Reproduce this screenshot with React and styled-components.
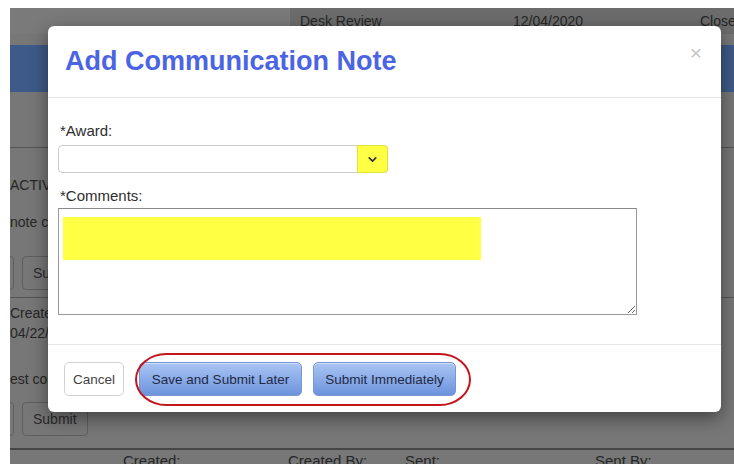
import styled, { createGlobalStyle } from 'styled-components';
import { ChevronDown } from 'lucide-react';

const GlobalStyle = createGlobalStyle`
  html, body {
    margin: 0;
    padding: 0;
    background: #fff;
  }
  body {
    font-family: "Liberation Sans", Arial, sans-serif;
  }
  * {
    box-sizing: border-box;
  }
`;

const Screen = styled.div`
  position: relative;
  width: 734px;
  height: 464px;
  padding: 8px 0 0 10px;
  overflow: hidden;
`;

/* page underneath the dialog, already dimmed */
const Page = styled.div`
  height: 100%;
  background: #777;
  color: #262626;
  font-size: 14px;
  line-height: 18px;
  overflow: hidden;
  display: flex;
  flex-direction: column;
`;

const TableRow = styled.div`
  display: grid;
  grid-template-columns: 280px 213px 187px 1fr;
  height: 26px;
  flex-shrink: 0;
`;

const Cell = styled.div`
  padding: 4px 10px;
  white-space: nowrap;
  background: ${(p) => (p.$blank ? '#7a7a7a' : '#6c6c6c')};
`;

const Band = styled.div`
  margin-top: 11px;
  height: 47px;
  flex-shrink: 0;
  background: #3e5a88;
`;

const Section = styled.div`
  margin-top: ${(p) => p.$top}px;
  border-top: 1px solid #555;
  flex-shrink: 0;
`;

const Line = styled.div`
  margin-top: ${(p) => p.$top || 0}px;
  white-space: nowrap;
`;

const ButtonRow = styled.div`
  display: flex;
  gap: 8px;
  margin-top: ${(p) => p.$top}px;
  margin-left: -52px;
`;

const PageButton = styled.div`
  height: 34px;
  padding: 0 10px;
  display: flex;
  align-items: center;
  border: 1px solid #5e5e5e;
  border-radius: 4px;
  color: #2a2a2a;
  width: ${(p) => p.$w}px;
`;

const Rule = styled.div`
  margin-top: 12px;
  border-top: 2px solid #454545;
  flex-shrink: 0;
`;

const HeadRow = styled.div`
  display: grid;
  grid-template-columns: 113px 165px 117px 190px 1fr;
  margin-top: 2px;
  font-size: 15px;
`;

/* dialog */
const Modal = styled.div`
  position: absolute;
  left: 48px;
  top: 26px;
  width: 673px;
  height: 386px;
  background: #fff;
  border-radius: 6px;
  box-shadow: 0 6px 18px rgba(0, 0, 0, 0.45);
  display: flex;
  flex-direction: column;
`;

const ModalHeader = styled.div`
  height: 72px;
  padding: 0 17px;
  display: flex;
  justify-content: space-between;
  align-items: center;
  border-bottom: 1px solid #e6e6e6;
`;

const Title = styled.h2`
  margin: 0;
  font-size: 27px;
  font-weight: 700;
  color: #4b64e4;
`;

const Close = styled.span`
  align-self: flex-start;
  margin-top: 15px;
  margin-right: 2px;
  font-size: 21px;
  color: #c4c4c4;
`;

const ModalBody = styled.div`
  flex: 1;
  padding: 0 10px;
`;

const Label = styled.div`
  margin-top: ${(p) => p.$top}px;
  padding-left: 2px;
  font-size: 15px;
  line-height: 18px;
  color: #2e2e2e;
`;

const SelectBox = styled.div`
  margin-top: 5px;
  width: 330px;
  height: 28px;
  display: flex;
  justify-content: flex-end;
  border: 1px solid #ccc;
  border-radius: 4px;
`;

const Caret = styled.div`
  width: 31px;
  margin: -1px -1px -1px 0;
  display: flex;
  align-items: center;
  justify-content: center;
  background: #ffff44;
  border: 1px solid #e2e23a;
  border-radius: 0 4px 4px 0;
  color: #333;
`;

const TextWrap = styled.div`
  position: relative;
  margin-top: 3px;
  width: 579px;
  height: 107px;
`;

const Comments = styled.textarea`
  display: block;
  width: 100%;
  height: 100%;
  margin: 0;
  border: 1px solid #999;
  border-top-color: #888;
  border-radius: 0;
  background: #fff;
`;

const Redaction = styled.div`
  position: absolute;
  left: 5px;
  top: 9px;
  width: 418px;
  height: 43px;
  background: #ffff44;
  pointer-events: none;
`;

const ModalFooter = styled.div`
  position: relative;
  height: 68px;
  padding: 17px 16px;
  display: flex;
  border-top: 1px solid #e6e6e6;
`;

const Button = styled.button`
  height: 34px;
  margin: 0 ${(p) => p.$after || 0}px 0 0;
  padding: 0;
  width: ${(p) => p.$w}px;
  font-family: "Liberation Sans", Arial, sans-serif;
  font-size: 13.5px;
  border-radius: 5px;
  color: ${(p) => (p.$primary ? '#1f2a45' : '#444')};
  border: 1px solid ${(p) => (p.$primary ? '#7896d2' : '#d2d2d2')};
  background: ${(p) =>
    p.$primary ? 'linear-gradient(#a9c5f3, #6d93dd)' : '#fff'};
  box-shadow: ${(p) =>
    p.$primary ? 'inset 0 1px 0 rgba(255,255,255,0.45)' : 'none'};
`;

const Highlight = styled.div`
  position: absolute;
  left: 87px;
  top: 8px;
  width: 336px;
  height: 53px;
  border: 2px solid #c3151c;
  border-radius: 32px / 27px;
  pointer-events: none;
`;

export default function App() {
  return (
    <Screen>
      <GlobalStyle />
      <Page>
        <TableRow>
          <Cell $blank />
          <Cell>Desk Review</Cell>
          <Cell>12/04/2020</Cell>
          <Cell>Closed</Cell>
        </TableRow>
        <Band />
        <Section $top={55}>
          <Line $top={28}>ACTIVE</Line>
          <Line $top={19}>note com</Line>
          <ButtonRow $top={25}>
            <PageButton $w={56} />
            <PageButton $w={66}>Submit</PageButton>
          </ButtonRow>
        </Section>
        <Section $top={7}>
          <Line $top={6}>Created</Line>
          <Line $top={2}>04/22/20</Line>
          <Line $top={28}>est com</Line>
          <ButtonRow $top={14}>
            <PageButton $w={56} />
            <PageButton $w={66}>Submit</PageButton>
          </ButtonRow>
        </Section>
        <Rule />
        <HeadRow>
          <span />
          <span>Created:</span>
          <span>Created By:</span>
          <span>Sent:</span>
          <span>Sent By:</span>
        </HeadRow>
      </Page>

      <Modal>
        <ModalHeader>
          <Title>Add Communication Note</Title>
          <Close>×</Close>
        </ModalHeader>
        <ModalBody>
          <Label $top={24}>*Award:</Label>
          <SelectBox>
            <Caret>
              <ChevronDown size={13} strokeWidth={3.2} />
            </Caret>
          </SelectBox>
          <Label $top={14}>*Comments:</Label>
          <TextWrap>
            <Comments />
            <Redaction />
          </TextWrap>
        </ModalBody>
        <ModalFooter>
          <Button $w={60} $after={15}>Cancel</Button>
          <Button $primary $w={163} $after={11}>Save and Submit Later</Button>
          <Button $primary $w={143}>Submit Immediately</Button>
          <Highlight />
        </ModalFooter>
      </Modal>
    </Screen>
  );
}
